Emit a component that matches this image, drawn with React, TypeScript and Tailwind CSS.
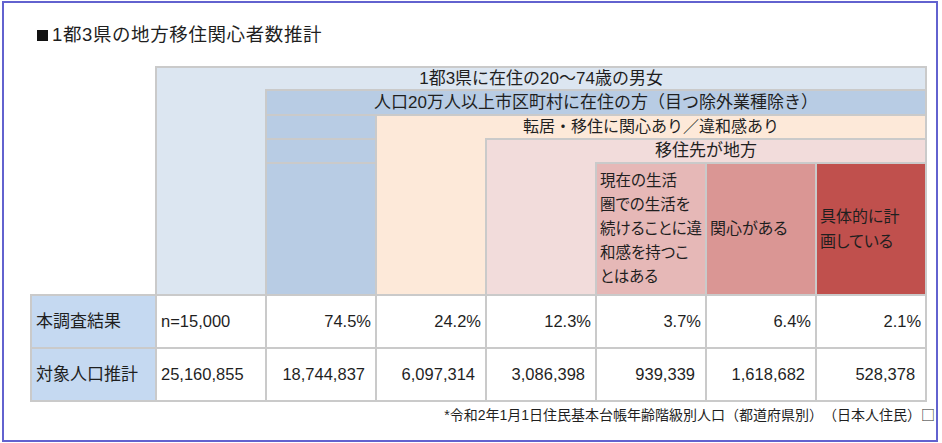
import React from 'react'

const font = "font-['Liberation_Sans','Noto_Sans_CJK_JP',sans-serif]"
const line = 'border-2 border-[#cacaca]'

const pct = ['74.5%', '24.2%', '12.3%', '3.7%', '6.4%', '2.1%']
const pop = ['18,744,837', '6,097,314', '3,086,398', '939,339', '1,618,682', '528,378']

export default function App() {
  return (
    <div className={`w-[942px] h-[443px] bg-white pt-px pl-[2px] text-[#1f1f1f] ${font}`}>
      <div className="w-[936px] h-[441px] border-2 border-[#6262cf] flex flex-col">
        <h1 className="ml-[33px] mt-[20px] flex items-center text-[18.5px] leading-[24px] tracking-[0.6px]">
          <span className="mr-[4px] inline-block w-[11px] h-[11px] bg-[#111]" />
          1都3県の地方移住関心者数推計
        </h1>

        <table className="ml-[26px] mt-[19px] w-[895px] table-fixed border-collapse">
          <colgroup>
            <col className="w-[125px]" />
            {Array.from({ length: 7 }).map((_, i) => (
              <col key={i} className="w-[110px]" />
            ))}
          </colgroup>
          <tbody>
            <tr className="h-[23px]">
              <td rowSpan={5} className="border-none" />
              <td colSpan={7} className={`${line} border-b-0 bg-[#dce6f1] text-center text-[17px] leading-[19px] p-0`}>
                1都3県に在住の20～74歳の男女
              </td>
            </tr>
            <tr className="h-[25px]">
              <td rowSpan={4} className={`${line} border-t-0 bg-[#dce6f1] p-0`} />
              <td colSpan={6} className={`${line} bg-[#b8cce4] text-center text-[17px] leading-[20px] p-0`}>
                人口20万人以上市区町村に在住の方（目つ除外業種除き）
              </td>
            </tr>
            <tr className="h-[24px]">
              <td className={`${line} bg-[#b8cce4] p-0`} />
              <td colSpan={5} className={`${line} border-b-0 bg-[#fde9d9] text-center text-[16px] leading-[20px] p-0`}>
                転居・移住に関心あり／違和感あり
              </td>
            </tr>
            <tr className="h-[24px]">
              <td className={`${line} bg-[#b8cce4] p-0`} />
              <td rowSpan={2} className={`${line} border-t-0 bg-[#fde9d9] p-0`} />
              <td colSpan={4} className={`${line} border-b-0 bg-[#f2dcdb] text-center text-[17px] leading-[20px] p-0`}>
                移住先が地方
              </td>
            </tr>
            <tr className="h-[132px]">
              <td className={`${line} bg-[#b8cce4] p-0`} />
              <td className={`${line} border-t-0 bg-[#f2dcdb] p-0`} />
              <td className={`${line} bg-[#e6b8b7] px-[3px] py-0 text-[15.5px] leading-[24px] [font-feature-settings:'palt'] whitespace-nowrap`}>
                現在の生活<br />圏での生活を<br />続けることに違<br />和感を持つこ<br />とはある
              </td>
              <td className={`${line} bg-[#da9694] px-[3px] py-0 text-[16px] leading-[24px] [font-feature-settings:'palt']`}>
                関心がある
              </td>
              <td className={`${line} bg-[#c0504d] px-[3px] py-0 text-[16px] leading-[25px] [font-feature-settings:'palt'] whitespace-nowrap`}>
                具体的に計<br />画している
              </td>
            </tr>
            <tr className="h-[53px] text-[16.5px]">
              <td className={`${line} bg-[#c5d9f1] pl-[4px] text-[17px]`}>本調査結果</td>
              <td className={`${line} pl-[4px]`}>n=15,000</td>
              {pct.map((v) => (
                <td key={v} className={`${line} text-right pr-[4px]`}>{v}</td>
              ))}
            </tr>
            <tr className="h-[53px] text-[16.5px]">
              <td className={`${line} bg-[#c5d9f1] pl-[4px] text-[17px]`}>対象人口推計</td>
              <td className={`${line} pl-[4px]`}>25,160,855</td>
              {pop.map((v) => (
                <td key={v} className={`${line} text-right pr-[10px]`}>{v}</td>
              ))}
            </tr>
          </tbody>
        </table>

        <p className="mt-[2px] pr-[1px] text-right text-[14px] leading-[20px] whitespace-pre">
          *令和2年1月1日住民基本台帳年齢階級別人口（都道府県別）　（日本人住民）
          <span className="font-['Noto_Sans_CJK_JP',sans-serif]">□</span>
        </p>
      </div>
    </div>
  )
}
